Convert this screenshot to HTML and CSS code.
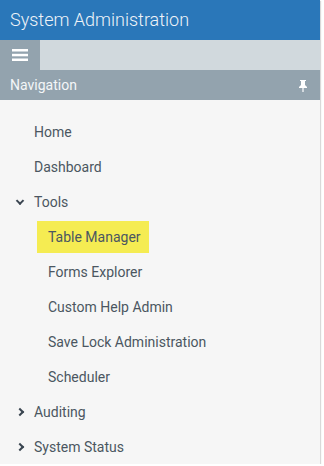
FILE: index.html
```html
<!DOCTYPE html>
<html lang="en">
<head>
    <meta charset="UTF-8">
    <meta name="viewport" content="width=device-width, initial-scale=1.0">
    <title>System Administration</title>
    <link rel="stylesheet" href="styles.css">
</head>
<body>
    <div class="panel">
        <div class="header">System Administration</div>
        <div class="toolbar">
            <button class="menu-button">
                <svg width="16" height="14" viewBox="0 0 16 14">
                    <rect x="0" y="1" width="16" height="2.5" fill="#fff"/>
                    <rect x="0" y="5.8" width="16" height="2.5" fill="#fff"/>
                    <rect x="0" y="10.5" width="16" height="2.5" fill="#fff"/>
                </svg>
            </button>
        </div>
        <div class="nav-title">
            <span>Navigation</span>
            <svg class="pin" width="10" height="14" viewBox="0 0 10 14">
                <path d="M2 1h6v1H7v4l2 2v1H1V8l2-2V2H2z" fill="#fff"/>
                <rect x="4.4" y="9" width="1.2" height="4" fill="#fff"/>
            </svg>
        </div>
        <ul class="nav-list">
            <li class="nav-item">Home</li>
            <li class="nav-item">Dashboard</li>
            <li class="nav-item has-children">
                <span class="chevron down"></span>Tools
            </li>
            <li class="nav-item sub"><span class="selected">Table Manager</span></li>
            <li class="nav-item sub">Forms Explorer</li>
            <li class="nav-item sub">Custom Help Admin</li>
            <li class="nav-item sub">Save Lock Administration</li>
            <li class="nav-item sub">Scheduler</li>
            <li class="nav-item has-children">
                <span class="chevron right"></span>Auditing
            </li>
            <li class="nav-item has-children">
                <span class="chevron right"></span>System Status
            </li>
        </ul>
    </div>
</body>
</html>
```

FILE: styles.css
```css
body {
    margin: 0;
    font-family: Roboto, "Liberation Sans", sans-serif;
    background: #fff;
}

.panel {
    width: 320px;
    height: 464px;
    background: #f6f6f6;
    box-shadow: 1px 1px 1px rgba(0, 0, 0, 0.15);
}

.header {
    height: 40px;
    background: #2a77b9;
    color: #eef3f8;
    font-size: 18px;
    font-weight: 300;
    line-height: 40px;
    padding-left: 10px;
}

.toolbar {
    height: 30px;
    background: #d1d9dd;
    display: flex;
}

.menu-button {
    width: 40px;
    height: 30px;
    border: none;
    padding: 0;
    background: #93a3ae;
    display: flex;
    justify-content: center;
    align-items: center;
}

.nav-title {
    height: 30px;
    background: #93a3ae;
    color: #f4f6f8;
    font-size: 14px;
    display: flex;
    align-items: center;
    justify-content: space-between;
    padding: 0 12px 0 10px;
}

.pin {
    margin-top: 1px;
}

.nav-list {
    list-style: none;
    margin: 0;
    padding: 14px 0 0 0;
}

.nav-item {
    height: 35px;
    display: flex;
    align-items: center;
    padding-left: 34px;
    font-size: 14px;
    color: #4b5661;
    position: relative;
}

.nav-item.sub {
    padding-left: 48px;
}

.selected {
    background: #f5ec52;
    margin-left: -11px;
    padding: 0 8px 0 11px;
    line-height: 32px;
}

.chevron {
    position: absolute;
    left: 17px;
    top: 50%;
    width: 4px;
    height: 4px;
    border-right: 2px solid #3a4550;
    border-bottom: 2px solid #3a4550;
}

.chevron.down {
    transform: translate(0, -70%) rotate(45deg);
}

.chevron.right {
    transform: translate(0, -50%) rotate(-45deg);
}
```
